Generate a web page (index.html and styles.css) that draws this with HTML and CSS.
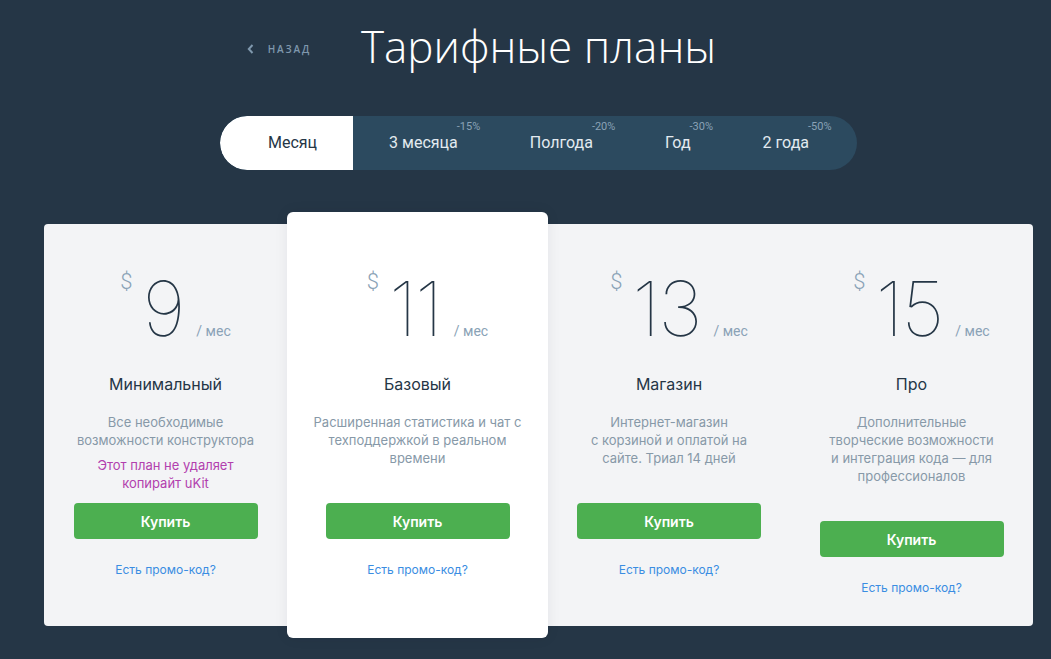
FILE: index.html
```html
<!DOCTYPE html>
<html lang="ru">
<head>
<meta charset="utf-8">
<title>Тарифные планы</title>
<link rel="stylesheet" href="styles.css">
</head>
<body>
<div class="page">
  <header class="header">
    <a class="back" href="#">
      <svg class="back-icon" width="7" height="10" viewBox="0 0 7 10"><path d="M5.5 1 L1.8 5 L5.5 9" fill="none" stroke="currentColor" stroke-width="2"/></svg>
      <span>НАЗАД</span>
    </a>
    <h1 class="title">Тарифные планы</h1>
  </header>

  <nav class="tabs-wrap">
    <div class="tabs">
      <div class="tab tab-active"><span class="tab-label">Месяц</span></div>
      <div class="tab"><span class="tab-label">3 месяца<span class="discount">-15%</span></span></div>
      <div class="tab"><span class="tab-label">Полгода<span class="discount">-20%</span></span></div>
      <div class="tab"><span class="tab-label">Год<span class="discount">-30%</span></span></div>
      <div class="tab tab-last"><span class="tab-label">2 года<span class="discount">-50%</span></span></div>
    </div>
  </nav>

  <section class="plans">
    <div class="plan plan-1">
      <div class="price"><span class="cur">$</span><span class="num">9</span><span class="per">/ мес</span></div>
      <div class="name">Минимальный</div>
      <div class="desc">
        <p>Все необходимые<br>возможности конструктора</p>
        <p class="note">Этот план не удаляет<br>копирайт uKit</p>
      </div>
      <a class="buy" href="#">Купить</a>
      <a class="promo" href="#">Есть промо-код?</a>
    </div>
    <div class="plan plan-featured">
      <div class="price"><span class="cur">$</span><span class="num">11</span><span class="per">/ мес</span></div>
      <div class="name">Базовый</div>
      <div class="desc">
        <p>Расширенная статистика и чат с<br>техподдержкой в реальном<br>времени</p>
      </div>
      <a class="buy" href="#">Купить</a>
      <a class="promo" href="#">Есть промо-код?</a>
    </div>
    <div class="plan plan-3">
      <div class="price"><span class="cur">$</span><span class="num">13</span><span class="per">/ мес</span></div>
      <div class="name">Магазин</div>
      <div class="desc">
        <p>Интернет-магазин<br>с корзиной и оплатой на<br>сайте. Триал 14 дней</p>
      </div>
      <a class="buy" href="#">Купить</a>
      <a class="promo" href="#">Есть промо-код?</a>
    </div>
    <div class="plan plan-4">
      <div class="price"><span class="cur">$</span><span class="num">15</span><span class="per">/ мес</span></div>
      <div class="name">Про</div>
      <div class="desc">
        <p>Дополнительные<br>творческие возможности<br>и интеграция кода — для<br>профессионалов</p>
      </div>
      <a class="buy" href="#">Купить</a>
      <a class="promo" href="#">Есть промо-код?</a>
    </div>
  </section>
</div>
</body>
</html>
```

FILE: styles.css
```css
* { box-sizing: border-box; }

html, body {
  margin: 0;
  padding: 0;
  background: #253646;
  height: 100%;
  overflow: hidden;
}

body {
  font-family: "Inter", "Noto Sans", sans-serif;
  color: #253646;
}

.page {
  width: 989px;
  margin-left: 44px;
}

/* Header */
.header {
  display: grid;
  grid-template-columns: 1fr auto 1fr;
  align-items: center;
  padding-top: 19px;
}

.back {
  grid-column: 1;
  justify-self: end;
  margin-right: 50px;
  display: flex;
  align-items: center;
  gap: 14px;
  color: #7f98ad;
  text-decoration: none;
  font-family: "Open Sans", sans-serif;
  font-size: 10px;
  font-weight: 600;
  letter-spacing: 1.8px;
  margin-top: 5px;
}

.back-icon { display: block; }

.title {
  grid-column: 2;
  margin: 0;
  font-family: "Open Sans", sans-serif;
  font-weight: 300;
  font-size: 44px;
  line-height: 55px;
  color: #ffffff;
}

/* Tabs */
.tabs-wrap {
  display: flex;
  justify-content: center;
  margin-top: 42px;
}

.tabs {
  display: flex;
  height: 54px;
  background: #2c4a5f;
  border-radius: 27px;
  overflow: hidden;
  font-family: "Roboto", sans-serif;
  font-size: 16px;
}

.tab {
  display: flex;
  align-items: center;
  padding: 0 36px;
  color: #e3eaf0;
}

.tab-active {
  padding-left: 48px;
  background: #ffffff;
  color: #253646;
  border-radius: 27px 0 0 27px;
}

.tab-last { padding-right: 48px; }

.tab-label {
  position: relative;
  line-height: 18px;
}

.discount {
  position: absolute;
  left: 100%;
  bottom: 100%;
  margin-left: -1px;
  margin-bottom: 1px;
  font-size: 11px;
  line-height: 13px;
  color: #8aa2b6;
  white-space: nowrap;
}

/* Plans */
.plans {
  display: flex;
  margin-top: 54px;
  background: #f3f4f6;
  border-radius: 4px;
  height: 402px;
}

.plan {
  display: flex;
  flex-direction: column;
  align-items: center;
  padding-top: 46px;
  text-align: center;
}

.plan-1 { width: 243px; }
.plan-3 { width: 242px; }
.plan-4 { width: 243px; }

.plan-featured {
  width: 261px;
  margin: -12px 0;
  padding-top: 58px;
  background: #ffffff;
  border-radius: 6px;
  box-shadow: 0 0 14px rgba(20, 30, 40, 0.07);
  position: relative;
  z-index: 1;
}

.price {
  display: flex;
  align-items: baseline;
  padding-left: 20px;
}

.cur {
  align-self: flex-start;
  margin-top: 1px;
  font-family: "Roboto", sans-serif;
  font-weight: 300;
  font-size: 22px;
  line-height: 22px;
  color: #8aa2b6;
}

.num {
  margin-left: 10px;
  font-family: "Inter", sans-serif;
  font-weight: 100;
  font-size: 76px;
  line-height: 76px;
  color: #253646;
  letter-spacing: -2px;
}

.per {
  margin-left: 13px;
  font-family: "Roboto", sans-serif;
  font-size: 14px;
  color: #8aa2b6;
}

.name {
  margin-top: 28px;
  font-size: 16px;
  line-height: 20px;
  color: #253646;
}

.desc {
  margin-top: 19px;
  min-height: 54px;
  font-size: 13px;
  line-height: 18px;
  color: #8799a8;
}

.desc p { margin: 0; }

.note {
  margin-top: 7px !important;
  margin-bottom: -25px !important;
  color: #b23fae;
}

.buy {
  display: flex;
  align-items: center;
  justify-content: center;
  margin-top: 36px;
  width: 184px;
  height: 36px;
  border-radius: 4px;
  background: #4caf50;
  color: #ffffff;
  font-size: 14px;
  font-weight: 600;
  text-decoration: none;
}

.promo {
  margin-top: 23px;
  font-size: 12px;
  line-height: 16px;
  color: #3a8de2;
  text-decoration: none;
}
```
